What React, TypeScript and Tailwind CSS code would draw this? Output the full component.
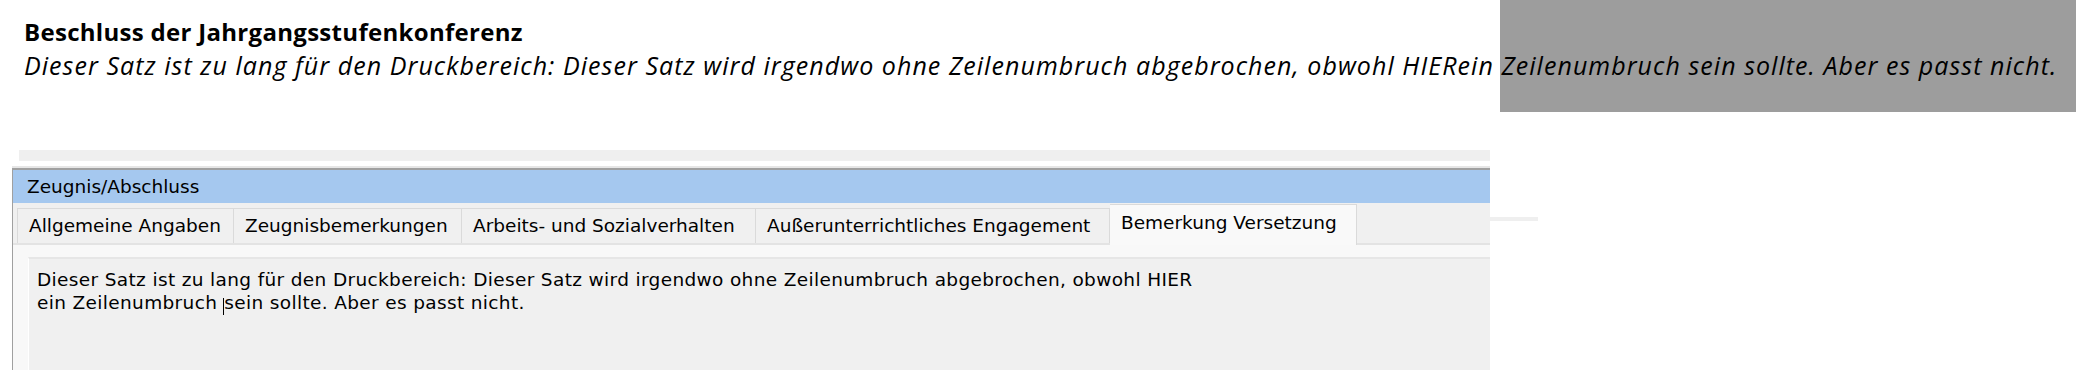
import React from "react";

const tabs = [
  { label: "Allgemeine Angaben", width: "w-[217px]" },
  { label: "Zeugnisbemerkungen", width: "w-[228px]" },
  { label: "Arbeits- und Sozialverhalten", width: "w-[294px]" },
  { label: "Außerunterrichtliches Engagement", width: "w-[354px]" },
];

export default function App() {
  return (
    <div className="relative w-[2076px] h-[379px] bg-white overflow-hidden">
      {/* grey print-area marker behind the heading */}
      <div className="absolute right-0 top-0 w-[576px] h-[112px] bg-[#9d9d9d]" />

      <div className="relative pl-[24px] pt-[16px] text-black font-['Open_Sans',sans-serif] whitespace-nowrap">
        <div className="text-[24px] leading-[32px] font-bold tracking-[0.3px]">
          Beschluss der Jahrgangsstufenkonferenz
        </div>
        <div className="text-[25px] leading-[34px] italic tracking-[1.05px]">
          Dieser Satz ist zu lang für den Druckbereich: Dieser Satz wird irgendwo ohne Zeilenumbruch
          abgebrochen, obwohl HIERein Zeilenumbruch sein sollte. Aber es passt nicht.
        </div>
      </div>

      <div className="mt-[68px] flex items-start pl-[12px] font-['DejaVu_Sans',sans-serif] text-[18.5px] text-black">
        <div className="w-[1478px] flex flex-col">
          <div className="h-[11px] ml-[7px] bg-[#efefef]" />
          <div className="h-[5px] bg-white" />
          <div className="h-[2px] bg-[#e6e6e6]" />

          <div className="border-l border-[#a0a0a0] flex flex-col">
            <div className="h-[2px] bg-[#a0a0a0]" />
            <div className="h-[33px] bg-[#a5c8ef] flex items-center pl-[14px]">
              Zeugnis/Abschluss
            </div>

            <div className="flex items-end h-[42px] bg-[#f0f0f0] pl-[4px] border-b-2 border-[#e3e3e3]">
              {tabs.map((t) => (
                <div
                  key={t.label}
                  className={`${t.width} h-[35px] flex items-center pl-[11px] border-t border-r border-[#dadada] first:border-l bg-[#f0f0f0] whitespace-nowrap`}
                >
                  {t.label}
                </div>
              ))}
              <div className="relative -mb-[2px] w-[247px] h-[41px] flex items-center pl-[11px] pb-[4px] border-t border-r border-[#dadada] bg-[#f9f9f9] whitespace-nowrap">
                Bemerkung Versetzung
              </div>
            </div>

            <div className="bg-[#f8f8f8] pl-[15px] pt-[12px]">
              <div className="h-[113px] bg-[#f0f0f0] border-t-2 border-[#e6e6e6] border-l border-l-white pl-[8px] pt-[9px] leading-[23px] tracking-[0.35px] whitespace-nowrap">
                <div>
                  Dieser Satz ist zu lang für den Druckbereich: Dieser Satz wird irgendwo ohne
                  Zeilenumbruch abgebrochen, obwohl HIER
                </div>
                <div>
                  ein Zeilenumbruch
                  <span className="inline-block w-[7px] h-[17px] border-r border-black align-[-6px]" />
                  sein sollte. Aber es passt nicht.
                </div>
              </div>
            </div>
          </div>
        </div>

        <div className="w-[48px] h-[4px] mt-[67px] bg-[#efefef]" />
      </div>
    </div>
  );
}
